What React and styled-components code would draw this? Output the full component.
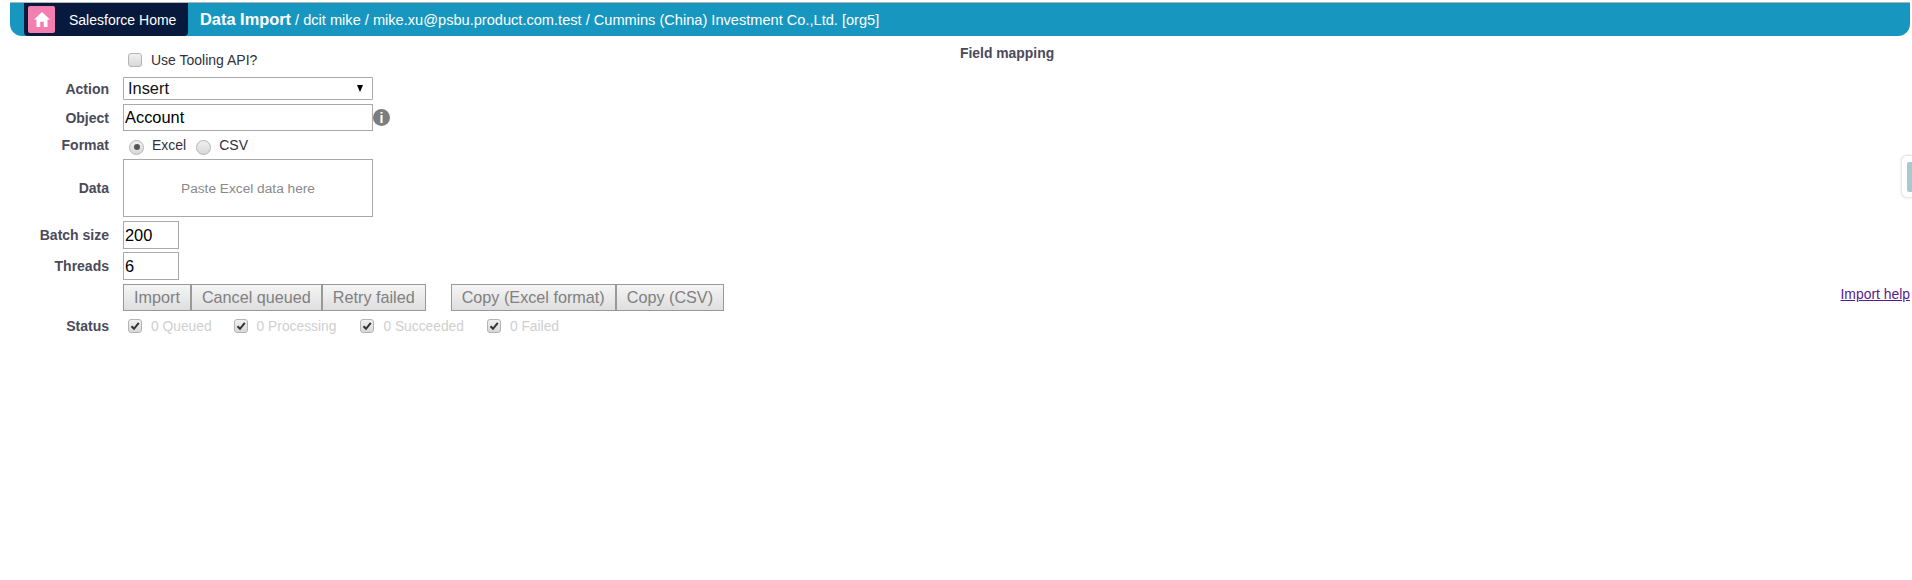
import React from "react";
import styled, { createGlobalStyle } from "styled-components";

const GlobalStyle = createGlobalStyle`
    html, body {
        margin: 0;
        padding: 0;
        background: #fff;
        font-family: "Liberation Sans", Arial, sans-serif;
    }
`;

const Page = styled.div`
    position: relative;
    width: 1912px;
    height: 580px;
    overflow: hidden;
    padding-top: 2px;
    box-sizing: border-box;
`;

const Header = styled.header`
    display: flex;
    align-items: stretch;
    box-sizing: border-box;
    height: 34px;
    margin: 0 2px 0 10px;
    padding-left: 14px;
    background: #1797c0;
    border-top: 1px solid #b5b5b5;
    border-radius: 0 0 12px 12px;
    color: #fff;
`;

const HomeLink = styled.a`
    display: flex;
    align-items: center;
    width: 164px;
    box-sizing: border-box;
    padding-left: 4px;
    background: #071a3e;
    border-radius: 0 0 4px 4px;
    font-size: 14px;
    color: #fff;
`;

const HomeIcon = styled.span`
    display: flex;
    align-items: center;
    justify-content: center;
    width: 27px;
    height: 27px;
    margin-right: 14px;
    background: #f27fb0;
    border-radius: 2px;
`;

const Title = styled.div`
    display: flex;
    align-items: baseline;
    margin-left: 12px;
    line-height: 32px;
    font-size: 14.6px;
    white-space: nowrap;
`;

const TitleStrong = styled.strong`
    font-size: 16.4px;
    margin-right: 4px;
`;

const Main = styled.main`
    display: grid;
    grid-template-columns: 960px 1fr;
`;

const Form = styled.form`
    display: flex;
    flex-direction: column;
    padding-top: 14px;
`;

const Row = styled.div`
    display: grid;
    grid-template-columns: 109px 1fr;
    column-gap: 14px;
    align-items: center;
    margin-bottom: ${(p) => p.$gap ?? 4}px;
`;

const Label = styled.label`
    justify-self: end;
    font-size: 14px;
    font-weight: bold;
    color: #4a4a5a;
`;

const Controls = styled.div`
    display: flex;
    align-items: center;
    height: ${(p) => p.$height}px;
    padding-left: ${(p) => p.$indent ?? 0}px;
    font-size: 14px;
    color: #303040;
`;

const Box = styled.span`
    display: inline-flex;
    align-items: center;
    justify-content: center;
    width: 12px;
    height: 12px;
    margin-right: 9px;
    background: linear-gradient(#f0f0f0, #d8d8d8);
    border: 1px solid #b4b4b4;
    border-radius: 3px;
`;

const Radio = styled.span`
    display: inline-flex;
    align-items: center;
    justify-content: center;
    width: 13px;
    height: 13px;
    margin: 4px 8px 0 ${(p) => p.$offset ?? 0}px;
    background: linear-gradient(#f0f0f0, #d8d8d8);
    border: 1px solid #b4b4b4;
    border-radius: 50%;

    &::after {
        content: "";
        display: ${(p) => (p.$checked ? "block" : "none")};
        width: 6px;
        height: 6px;
        border-radius: 50%;
        background: #555;
    }
`;

const Select = styled.div`
    display: flex;
    align-items: center;
    justify-content: space-between;
    box-sizing: border-box;
    width: 250px;
    height: 23px;
    padding: 0 9px 0 4px;
    border: 1px solid #a9a9a9;
    border-radius: 1px;
    font-size: 16.4px;
    color: #111;
`;

const Caret = styled.span`
    width: 0;
    height: 0;
    border-left: 3.5px solid transparent;
    border-right: 3.5px solid transparent;
    border-top: 7px solid #000;
`;

const TextInput = styled.input`
    box-sizing: border-box;
    width: ${(p) => p.$width}px;
    height: ${(p) => p.$height}px;
    padding: 0 1px;
    border: 1px solid #a9a9a9;
    border-radius: 0;
    outline: none;
    font-family: inherit;
    font-size: 16.4px;
    color: #000;
`;

const InfoDot = styled.span`
    display: flex;
    align-items: center;
    justify-content: center;
    width: 17px;
    height: 17px;
    border-radius: 50%;
    background: #7d7d7d;
    color: #fff;
    font-size: 14px;
    font-weight: bold;
`;

const PasteArea = styled.div`
    display: flex;
    align-items: center;
    justify-content: center;
    box-sizing: border-box;
    width: 250px;
    height: 58px;
    border: 1px solid #a9a9a9;
    font-size: 13.7px;
    color: #8a8a8a;
`;

const ButtonRow = styled.div`
    display: flex;
    align-items: center;
    margin-left: 123px;
    margin-bottom: 7px;
`;

const Button = styled.button`
    box-sizing: border-box;
    height: 27px;
    padding: 0 10px;
    margin-left: ${(p) => p.$offset ?? 0}px;
    background: linear-gradient(#f5f5f5, #dedede);
    border: 1px solid #999;
    border-radius: 0;
    font-family: inherit;
    font-size: 16.2px;
    color: #808080;
`;

const StatusItem = styled.span`
    display: inline-flex;
    align-items: center;
    margin-right: ${(p) => p.$gap}px;
    font-size: 13.8px;
    color: #cfcfcf;
`;

const Side = styled.aside`
    display: flex;
    flex-direction: column;
    padding-top: 10px;
    padding-right: 2px;
`;

const Heading = styled.h2`
    margin: 0;
    font-size: 13.9px;
    line-height: 15px;
    font-weight: bold;
    color: #4a4a5a;
`;

const HelpLink = styled.a`
    align-self: flex-end;
    margin-top: 225px;
    font-size: 13.9px;
    line-height: 16px;
    color: #551a8b;
    text-decoration: underline;
`;

const SideTab = styled.div`
    position: absolute;
    top: 155px;
    right: 0;
    box-sizing: border-box;
    width: 11px;
    height: 43px;
    padding: 6px 0 5px 5px;
    background: #fff;
    border: 1px solid #e8e8e8;
    border-right: 0;
    border-radius: 6px 0 0 6px;
    box-shadow: 0 0 3px rgba(0, 0, 0, 0.12);

    &::after {
        content: "";
        display: block;
        height: 100%;
        background: #a9c8d4;
        border-radius: 2px 0 0 2px;
    }
`;

const Check = () => (
    <svg width="10" height="10" viewBox="0 0 10 10">
        <path d="M1.5 5.2 L4 7.8 L8.8 1.8" fill="none" stroke="#333" strokeWidth="2" />
    </svg>
);

const statuses = [
    { text: "0 Queued", gap: 22 },
    { text: "0 Processing", gap: 24 },
    { text: "0 Succeeded", gap: 23 },
    { text: "0 Failed", gap: 0 },
];

const App = () => (
    <Page>
        <GlobalStyle />
        <Header>
            <HomeLink>
                <HomeIcon>
                    <svg width="18" height="17" viewBox="0 0 18 17">
                        <path d="M9 1 L17 8.5 H14.5 V16 H10.8 V10.8 H7.2 V16 H3.5 V8.5 H1 Z" fill="#fff" />
                    </svg>
                </HomeIcon>
                Salesforce Home
            </HomeLink>
            <Title>
                <TitleStrong>Data Import</TitleStrong>
                / dcit mike / mike.xu@psbu.product.com.test / Cummins (China) Investment Co.,Ltd. [org5]
            </Title>
        </Header>
        <Main>
            <Form>
                <Row $gap={7}>
                    <span />
                    <Controls $height={20} $indent={5}>
                        <Box />
                        Use Tooling API?
                    </Controls>
                </Row>
                <Row>
                    <Label>Action</Label>
                    <Select>
                        Insert
                        <Caret />
                    </Select>
                </Row>
                <Row>
                    <Label>Object</Label>
                    <Controls $height={27}>
                        <TextInput $width={250} $height={27} defaultValue="Account" />
                        <InfoDot>i</InfoDot>
                    </Controls>
                </Row>
                <Row>
                    <Label>Format</Label>
                    <Controls $height={20} $indent={6}>
                        <Radio $checked />
                        Excel
                        <Radio $offset={10} />
                        CSV
                    </Controls>
                </Row>
                <Row>
                    <Label>Data</Label>
                    <PasteArea>Paste Excel data here</PasteArea>
                </Row>
                <Row $gap={3}>
                    <Label>Batch size</Label>
                    <TextInput $width={56} $height={28} defaultValue="200" />
                </Row>
                <Row>
                    <Label>Threads</Label>
                    <TextInput $width={56} $height={28} defaultValue="6" />
                </Row>
                <ButtonRow>
                    <Button>Import</Button>
                    <Button>Cancel queued</Button>
                    <Button>Retry failed</Button>
                    <Button $offset={25}>Copy (Excel format)</Button>
                    <Button>Copy (CSV)</Button>
                </ButtonRow>
                <Row>
                    <Label>Status</Label>
                    <Controls $height={16} $indent={5}>
                        {statuses.map((s) => (
                            <StatusItem key={s.text} $gap={s.gap}>
                                <Box>
                                    <Check />
                                </Box>
                                {s.text}
                            </StatusItem>
                        ))}
                    </Controls>
                </Row>
            </Form>
            <Side>
                <Heading>Field mapping</Heading>
                <HelpLink>Import help</HelpLink>
            </Side>
        </Main>
        <SideTab />
    </Page>
);

export default App;
